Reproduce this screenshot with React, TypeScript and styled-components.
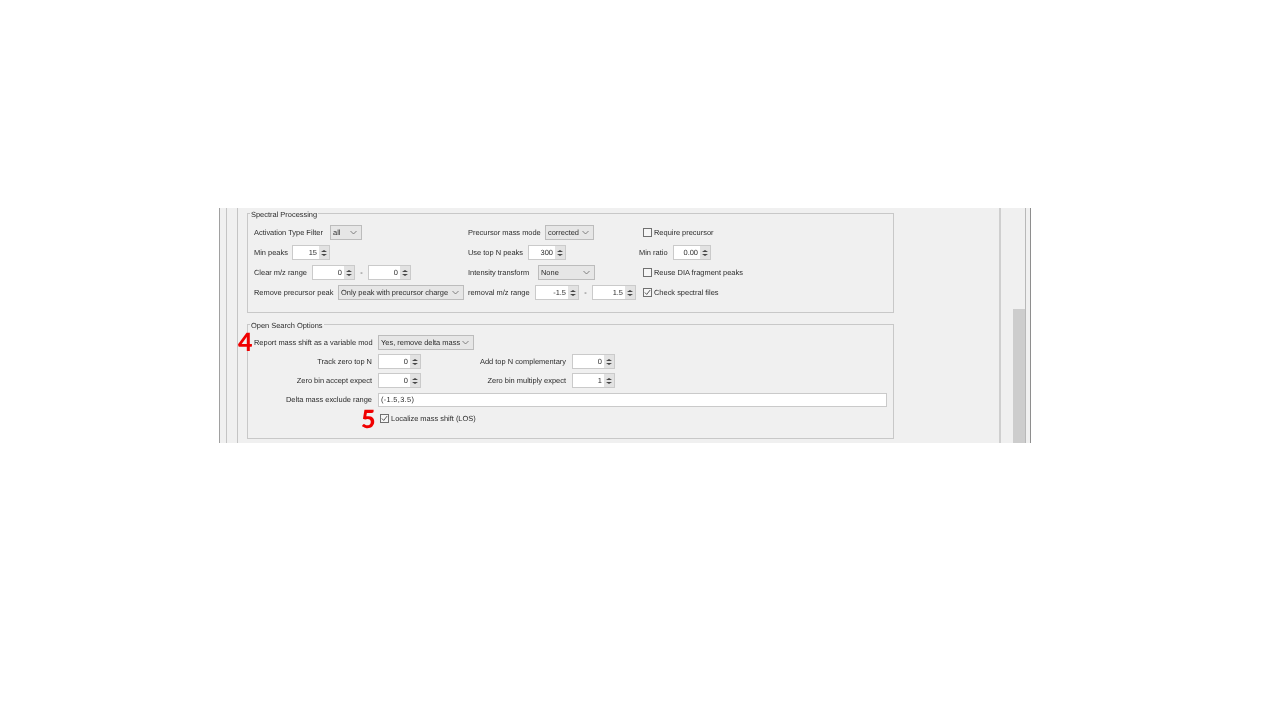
import React from 'react';
import styled, { createGlobalStyle } from 'styled-components';

const Global = createGlobalStyle`
    html, body { margin: 0; padding: 0; background: #fff; }
    body { font-family: "Liberation Sans", Arial, sans-serif; text-rendering: geometricPrecision; }
`;

const Page = styled.div`
    width: 1280px;
    height: 720px;
    padding: 208px 0 0 219px;
    box-sizing: border-box;
    overflow: hidden;
`;

const Window = styled.div`
    width: 812px;
    height: 235px;
    box-sizing: border-box;
    display: flex;
    background: #f0f0f0;
    border-left: 1px solid #a0a0a0;
    border-right: 1px solid #8e8e8e;
    overflow: hidden;
    color: #2c2c2c;
    font-size: 7.45px;
    filter: blur(0.3px);
`;

const OuterPane = styled.div`
    margin-left: 6px;
    padding-left: 10px;
    border-left: 1px solid #c4c4c4;
    display: flex;
`;

const InnerPane = styled.div`
    width: 764px;
    box-sizing: border-box;
    padding-left: 9px;
    border-left: 1px solid #c4c4c4;
    border-right: 2px solid #cfcfcf;
`;

const Track = styled.div`
    width: 12px;
    margin-left: 12px;
    border-right: 1px solid #b8b8b8;
    background: #f0f0f0;
`;

const Thumb = styled.div`
    height: 134px;
    margin-top: 101px;
    background: #cdcdcd;
`;

const Group = styled.fieldset<{ $top: number; $bottom: number }>`
    width: 647px;
    box-sizing: border-box;
    margin: 0 0 6px;
    padding: ${(p) => p.$top}px 6px ${(p) => p.$bottom}px;
    border: 1px solid #c8c8c8;
    min-width: 0;
`;

const Legend = styled.legend`
    margin-left: -4px;
    padding: 0 1px;
    line-height: 10px;
    position: relative;
    top: 2px;
`;

const ProcessingGrid = styled.div`
    display: grid;
    grid-template-columns: 214px 171px 1fr;
    row-gap: 5px;
`;

const Cell = styled.div`
    display: flex;
    align-items: center;
    height: 15px;
    white-space: nowrap;
`;

const Label = styled.span<{ $w: number }>`
    width: ${(p) => p.$w}px;
    flex: none;
`;

const SearchRows = styled.div`
    display: flex;
    flex-direction: column;
    row-gap: 4px;
`;

const SearchRow = styled.div`
    position: relative;
    display: flex;
    align-items: center;
    height: 15px;
    white-space: nowrap;
`;

const RightLabel = styled.span<{ $w: number }>`
    width: ${(p) => p.$w}px;
    flex: none;
    padding-right: 6px;
    box-sizing: border-box;
    text-align: right;
`;

const Callout = styled.span<{ $left: number; $top: number }>`
    position: absolute;
    left: ${(p) => p.$left}px;
    top: ${(p) => p.$top}px;
    color: #f00000;
    font-family: Lato, "Open Sans", sans-serif;
    font-weight: 900;
    font-size: 25px;
    line-height: 26px;
`;

const SelectBox = styled.div<{ $w: number }>`
    width: ${(p) => p.$w}px;
    height: 15px;
    flex: none;
    box-sizing: border-box;
    display: flex;
    align-items: center;
    justify-content: space-between;
    padding: 0 4px 0 2px;
    background: #e6e6e6;
    border: 1px solid #bcbcbc;
    svg { width: 7px; height: 5px; flex: none; }
`;

const Spinner = styled.div<{ $w: number }>`
    width: ${(p) => p.$w}px;
    height: 15px;
    flex: none;
    box-sizing: border-box;
    display: flex;
    background: #e2e2e2;
    border: 1px solid #cacaca;
`;

const SpinnerValue = styled.div`
    flex: 1;
    display: flex;
    align-items: center;
    justify-content: flex-end;
    background: #fff;
    padding-right: 2px;
`;

const SpinnerButtons = styled.div`
    width: 10px;
    display: flex;
    flex-direction: column;
    align-items: center;
    justify-content: center;
    gap: 2px;
`;

const Arrow = styled.i<{ $down?: boolean }>`
    width: 0;
    height: 0;
    border-left: 3px solid transparent;
    border-right: 3px solid transparent;
    ${(p) => (p.$down ? 'border-top: 2.5px solid #444;' : 'border-bottom: 2.5px solid #444;')}
`;

const Dash = styled.span`
    width: 13px;
    flex: none;
    text-align: center;
`;

const CheckField = styled.div<{ $indent: number }>`
    display: flex;
    align-items: center;
    gap: 2px;
    margin-left: ${(p) => p.$indent}px;
`;

const CheckBox = styled.span`
    width: 9px;
    height: 9px;
    flex: none;
    box-sizing: border-box;
    display: block;
    background: #f6f6f6;
    border: 1px solid #707070;
    svg { display: block; width: 7px; height: 7px; }
`;

const TextField = styled.div`
    width: 509px;
    height: 14px;
    box-sizing: border-box;
    flex: none;
    display: flex;
    align-items: center;
    padding-left: 2px;
    background: #fff;
    border: 1px solid #cacaca;
    letter-spacing: 0.3px;
`;

const Chevron = () => (
    <svg viewBox="0 0 7 5">
        <path d="M0.5 1 L3.5 4 L6.5 1" fill="none" stroke="#666" strokeWidth="0.8" />
    </svg>
);

const Select = ({ w, children }: { w: number; children: string }) => (
    <SelectBox $w={w}>
        <span>{children}</span>
        <Chevron />
    </SelectBox>
);

const Spin = ({ w, value }: { w: number; value: string }) => (
    <Spinner $w={w}>
        <SpinnerValue>{value}</SpinnerValue>
        <SpinnerButtons>
            <Arrow />
            <Arrow $down />
        </SpinnerButtons>
    </Spinner>
);

const Check = ({ indent, checked, children }: { indent: number; checked?: boolean; children: string }) => (
    <CheckField $indent={indent}>
        <CheckBox>
            {checked && (
                <svg viewBox="0 0 8 8">
                    <path d="M1 4 L3.1 6.2 L7 1.2" fill="none" stroke="#444" strokeWidth="1" />
                </svg>
            )}
        </CheckBox>
        <span>{children}</span>
    </CheckField>
);

export default function App() {
    return (
        <Page>
            <Global />
            <Window>
                <OuterPane>
                    <InnerPane>
                        <Group $top={7} $bottom={12}>
                            <Legend>Spectral Processing</Legend>
                            <ProcessingGrid>
                                <Cell><Label $w={76}>Activation Type Filter</Label><Select w={32}>all</Select></Cell>
                                <Cell><Label $w={77}>Precursor mass mode</Label><Select w={49}>corrected</Select></Cell>
                                <Cell><Check indent={4}>Require precursor</Check></Cell>

                                <Cell><Label $w={38}>Min peaks</Label><Spin w={38} value="15" /></Cell>
                                <Cell><Label $w={60}>Use top N peaks</Label><Spin w={38} value="300" /></Cell>
                                <Cell><Label $w={34}>Min ratio</Label><Spin w={38} value="0.00" /></Cell>

                                <Cell><Label $w={58}>Clear m/z range</Label><Spin w={43} value="0" /><Dash>-</Dash><Spin w={43} value="0" /></Cell>
                                <Cell><Label $w={70}>Intensity transform</Label><Select w={57}>None</Select></Cell>
                                <Cell><Check indent={4}>Reuse DIA fragment peaks</Check></Cell>

                                <Cell><Label $w={84}>Remove precursor peak</Label><Select w={126}>Only peak with precursor charge</Select></Cell>
                                <Cell><Label $w={67}>removal m/z range</Label><Spin w={44} value="-1.5" /><Dash>-</Dash><Spin w={44} value="1.5" /></Cell>
                                <Cell><Check indent={4} checked>Check spectral files</Check></Cell>
                            </ProcessingGrid>
                        </Group>
                        <Group $top={6} $bottom={12}>
                            <Legend>Open Search Options</Legend>
                            <SearchRows>
                                <SearchRow>
                                    <Callout $left={-16} $top={-6}>4</Callout>
                                    <RightLabel $w={124}>Report mass shift as a variable mod</RightLabel>
                                    <Select w={96}>Yes, remove delta mass</Select>
                                </SearchRow>
                                <SearchRow>
                                    <RightLabel $w={124}>Track zero top N</RightLabel>
                                    <Spin w={43} value="0" />
                                    <RightLabel $w={151}>Add top N complementary</RightLabel>
                                    <Spin w={43} value="0" />
                                </SearchRow>
                                <SearchRow>
                                    <RightLabel $w={124}>Zero bin accept expect</RightLabel>
                                    <Spin w={43} value="0" />
                                    <RightLabel $w={151}>Zero bin multiply expect</RightLabel>
                                    <Spin w={43} value="1" />
                                </SearchRow>
                                <SearchRow>
                                    <RightLabel $w={124}>Delta mass exclude range</RightLabel>
                                    <TextField>(-1.5,3.5)</TextField>
                                </SearchRow>
                                <SearchRow>
                                    <Callout $left={107} $top={-5}>5</Callout>
                                    <Check indent={126} checked>Localize mass shift (LOS)</Check>
                                </SearchRow>
                            </SearchRows>
                        </Group>
                    </InnerPane>
                    <Track>
                        <Thumb />
                    </Track>
                </OuterPane>
            </Window>
        </Page>
    );
}
